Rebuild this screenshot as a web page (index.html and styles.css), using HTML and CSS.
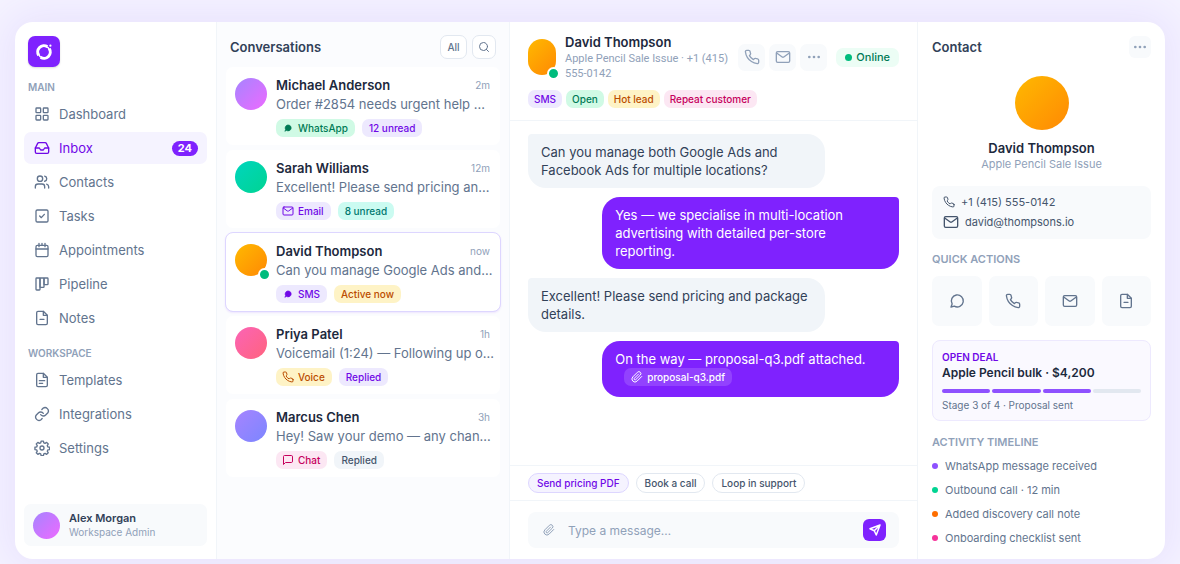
FILE: index.html
```html
<!DOCTYPE html>
<html lang="en">
<head>
  <meta charset="UTF-8" />
  <meta name="viewport" content="width=device-width, initial-scale=1.0"/>
  <title>Inbox</title>
  <link rel="stylesheet" href="styles.css">
</head>
<body>

  <!-- shared icons -->
  <svg class="sprite" aria-hidden="true">
    <symbol id="i-grid" viewBox="0 0 24 24"><rect x="3" y="3" width="7" height="7" rx="1"/><rect x="14" y="3" width="7" height="7" rx="1"/><rect x="3" y="14" width="7" height="7" rx="1"/><rect x="14" y="14" width="7" height="7" rx="1"/></symbol>
    <symbol id="i-inbox" viewBox="0 0 24 24"><path d="M22 12h-6l-2 3h-4l-2-3H2"/><path d="M5.5 5.1 2 12v6a2 2 0 0 0 2 2h16a2 2 0 0 0 2-2v-6l-3.500-6.900A2 2 0 0 0 16.800 4H7.200a2 2 0 0 0-1.700 1.100z"/></symbol>
    <symbol id="i-users" viewBox="0 0 24 24"><path d="M16 21v-2a4 4 0 0 0-4-4H6a4 4 0 0 0-4 4v2"/><circle cx="9" cy="7" r="4"/><path d="M22 21v-2a4 4 0 0 0-3-3.900M16 3.100a4 4 0 0 1 0 7.800"/></symbol>
    <symbol id="i-check" viewBox="0 0 24 24"><rect x="3" y="3" width="18" height="18" rx="2"/><path d="m8.500 12 2.500 2.500 4.500-5"/></symbol>
    <symbol id="i-calendar" viewBox="0 0 24 24"><rect x="3" y="5" width="18" height="17" rx="2"/><path d="M3 10.500h18M7.500 2v5M16.500 2v5M12 2v3"/></symbol>
    <symbol id="i-pipeline" viewBox="0 0 24 24"><rect x="3" y="3" width="6" height="18" rx="1"/><rect x="9" y="3" width="6" height="14" rx="1"/><rect x="15" y="3" width="6" height="10" rx="1"/></symbol>
    <symbol id="i-note" viewBox="0 0 24 24"><path d="M14 2H6a2 2 0 0 0-2 2v16a2 2 0 0 0 2 2h12a2 2 0 0 0 2-2V8z"/><path d="M14 2v6h6M9 14h6"/></symbol>
    <symbol id="i-doc" viewBox="0 0 24 24"><path d="M14 2H6a2 2 0 0 0-2 2v16a2 2 0 0 0 2 2h12a2 2 0 0 0 2-2V8z"/><path d="M14 2v6h6M8 13h8M8 17h5"/></symbol>
    <symbol id="i-link" viewBox="0 0 24 24"><path d="M10 13a5 5 0 0 0 7.500.5l3-3a5 5 0 0 0-7-7l-1.700 1.700"/><path d="M14 11a5 5 0 0 0-7.500-.5l-3 3a5 5 0 0 0 7 7l1.700-1.700"/></symbol>
    <symbol id="i-gear" viewBox="0 0 24 24"><circle cx="12" cy="12" r="3"/><path d="M10.300 2.500h3.400l.6 2.700 1.900.8 2.400-1.500 2.400 2.400-1.500 2.400.8 1.900 2.700.6v3.400l-2.700.6-.8 1.900 1.500 2.400-2.400 2.400-2.400-1.500-1.900.8-.6 2.700h-3.400l-.6-2.700-1.900-.8-2.400 1.500L3 20.100l1.500-2.400-.8-1.900-2.700-.6v-3.400l2.700-.6.8-1.900L3 6.900l2.400-2.400L7.800 6l1.900-.8z" transform="translate(.4 -.9)"/></symbol>
    <symbol id="i-search" viewBox="0 0 24 24"><circle cx="11" cy="11" r="8"/><path d="m21 21-4.300-4.300"/></symbol>
    <symbol id="i-phone" viewBox="0 0 24 24"><path d="M22 16.900v3a2 2 0 0 1-2.200 2 19.800 19.800 0 0 1-8.600-3.100 19.500 19.500 0 0 1-6-6 19.800 19.800 0 0 1-3.100-8.700A2 2 0 0 1 4.100 2h3a2 2 0 0 1 2 1.700c.1 1 .4 1.900.7 2.800a2 2 0 0 1-.5 2.100L8.100 9.900a16 16 0 0 0 6 6l1.300-1.300a2 2 0 0 1 2.100-.4c.9.3 1.800.6 2.800.7a2 2 0 0 1 1.700 2z"/></symbol>
    <symbol id="i-mail" viewBox="0 0 24 24"><rect x="2" y="4" width="20" height="16" rx="2"/><path d="m2.500 6 8.300 6a2 2 0 0 0 2.400 0l8.300-6"/></symbol>
    <symbol id="i-dots" viewBox="0 0 24 24"><g fill="currentColor" stroke="none"><circle cx="5" cy="12" r="2"/><circle cx="12" cy="12" r="2"/><circle cx="19" cy="12" r="2"/></g></symbol>
    <symbol id="i-bubble" viewBox="0 0 24 24"><path d="M3 21l1.700-4.600A9 9 0 1 1 8 19.700z"/></symbol>
    <symbol id="i-chat" viewBox="0 0 24 24"><path d="M21 15a2 2 0 0 1-2 2H7l-4 4V5a2 2 0 0 1 2-2h14a2 2 0 0 1 2 2z"/></symbol>
    <symbol id="i-clip" viewBox="0 0 24 24"><path d="m21.400 11-9.200 9.200a6 6 0 0 1-8.500-8.500l9.200-9.200a4 4 0 0 1 5.700 5.700l-9.200 9.200a2 2 0 0 1-2.800-2.800l8.500-8.500"/></symbol>
    <symbol id="i-send" viewBox="0 0 24 24"><path d="M22 2 2 9.500l8.500 4L14.500 22zM22 2 10.500 13.500"/></symbol>
  </svg>

  <div class="app">

    <aside class="sidebar">
      <a class="logo" href="#" aria-label="Home">
        <svg viewBox="0 0 24 24"><path d="M5 16.500A8.300 8.300 0 0 1 16.500 5" /><path d="M19 7.500A8.300 8.300 0 0 1 7.500 19"/><path class="join" d="M4.500 14.500A8 8 0 0 0 9.500 19.500M14.500 4.500A8 8 0 0 1 19.500 9.500"/><circle class="spark" cx="20.500" cy="3.500" r="1.500"/></svg>
      </a>

      <h3 class="nav-label">MAIN</h3>
      <nav class="nav">
        <a href="#"><svg class="icon"><use href="#i-grid"/></svg>Dashboard</a>
        <a href="#" class="active"><svg class="icon"><use href="#i-inbox"/></svg>Inbox<span class="count">24</span></a>
        <a href="#"><svg class="icon"><use href="#i-users"/></svg>Contacts</a>
        <a href="#"><svg class="icon"><use href="#i-check"/></svg>Tasks</a>
        <a href="#"><svg class="icon"><use href="#i-calendar"/></svg>Appointments</a>
        <a href="#"><svg class="icon"><use href="#i-pipeline"/></svg>Pipeline</a>
        <a href="#"><svg class="icon"><use href="#i-note"/></svg>Notes</a>
      </nav>

      <h3 class="nav-label">WORKSPACE</h3>
      <nav class="nav">
        <a href="#"><svg class="icon"><use href="#i-doc"/></svg>Templates</a>
        <a href="#"><svg class="icon"><use href="#i-link"/></svg>Integrations</a>
        <a href="#"><svg class="icon"><use href="#i-gear"/></svg>Settings</a>
      </nav>

      <div class="user">
        <span class="avatar avatar-user violet"></span>
        <div>
          <div class="user-name">Alex Morgan</div>
          <div class="user-role">Workspace Admin</div>
        </div>
      </div>
    </aside>

    <section class="conversations">
      <header class="panel-head">
        <h2>Conversations</h2>
        <button class="outline-btn all-btn">All</button>
        <button class="outline-btn" aria-label="Search"><svg class="icon small"><use href="#i-search"/></svg></button>
      </header>

      <div class="conv-list">
        <a class="conv" href="#">
          <span class="avatar violet"></span>
          <div class="conv-body">
            <div class="conv-top"><strong>Michael Anderson</strong><time>2m</time></div>
            <p>Order #2854 needs urgent help …</p>
            <div class="tags">
              <span class="tag green"><svg class="icon small solid"><use href="#i-bubble"/></svg>WhatsApp</span>
              <span class="tag purple">12 unread</span>
            </div>
          </div>
        </a>
        <a class="conv" href="#">
          <span class="avatar teal-bg"></span>
          <div class="conv-body">
            <div class="conv-top"><strong>Sarah Williams</strong><time>12m</time></div>
            <p>Excellent! Please send pricing an…</p>
            <div class="tags">
              <span class="tag purple"><svg class="icon small"><use href="#i-mail"/></svg>Email</span>
              <span class="tag teal">8 unread</span>
            </div>
          </div>
        </a>
        <a class="conv selected" href="#">
          <span class="avatar orange online"></span>
          <div class="conv-body">
            <div class="conv-top"><strong>David Thompson</strong><time>now</time></div>
            <p>Can you manage Google Ads and…</p>
            <div class="tags">
              <span class="tag purple"><svg class="icon small solid"><use href="#i-bubble"/></svg>SMS</span>
              <span class="tag amber">Active now</span>
            </div>
          </div>
        </a>
        <a class="conv" href="#">
          <span class="avatar pink-bg"></span>
          <div class="conv-body">
            <div class="conv-top"><strong>Priya Patel</strong><time>1h</time></div>
            <p>Voicemail (1:24) — Following up o…</p>
            <div class="tags">
              <span class="tag amber"><svg class="icon small"><use href="#i-phone"/></svg>Voice</span>
              <span class="tag purple">Replied</span>
            </div>
          </div>
        </a>
        <a class="conv" href="#">
          <span class="avatar indigo"></span>
          <div class="conv-body">
            <div class="conv-top"><strong>Marcus Chen</strong><time>3h</time></div>
            <p>Hey! Saw your demo — any chan…</p>
            <div class="tags">
              <span class="tag pink"><svg class="icon small"><use href="#i-chat"/></svg>Chat</span>
              <span class="tag slate">Replied</span>
            </div>
          </div>
        </a>
      </div>
    </section>

    <main class="chat">
      <header class="chat-head">
        <div class="chat-person">
          <span class="avatar avatar-chat orange online"></span>
          <div class="chat-who">
            <h2>David Thompson</h2>
            <p>Apple Pencil Sale Issue · +1 (415) 555-0142</p>
          </div>
          <div class="chat-actions">
            <button aria-label="Call"><svg class="icon"><use href="#i-phone"/></svg></button>
            <button aria-label="Email"><svg class="icon"><use href="#i-mail"/></svg></button>
            <button aria-label="More"><svg class="icon"><use href="#i-dots"/></svg></button>
          </div>
          <span class="status">Online</span>
        </div>
        <div class="chat-tags">
          <span class="tag purple">SMS</span>
          <span class="tag green">Open</span>
          <span class="tag amber">Hot lead</span>
          <span class="tag pink">Repeat customer</span>
        </div>
      </header>

      <div class="messages">
        <div class="msg">Can you manage both Google Ads and Facebook Ads for multiple locations?</div>
        <div class="msg sent">Yes — we specialise in multi-location advertising with detailed per-store reporting.</div>
        <div class="msg">Excellent! Please send pricing and package details.</div>
        <div class="msg sent">On the way — proposal-q3.pdf attached.
          <a class="file" href="#"><svg class="icon small"><use href="#i-clip"/></svg>proposal-q3.pdf</a>
        </div>
      </div>

      <div class="replies">
        <button class="on">Send pricing PDF</button>
        <button>Book a call</button>
        <button>Loop in support</button>
      </div>

      <form class="composer">
        <div class="composer-box">
          <button type="button" class="attach" aria-label="Attach file"><svg class="icon small"><use href="#i-clip"/></svg></button>
          <input type="text" aria-label="Message" placeholder="Type a message…" />
          <button type="button" class="send" aria-label="Send"><svg class="icon small"><use href="#i-send"/></svg></button>
        </div>
      </form>
    </main>

    <aside class="contact">
      <header class="contact-head">
        <h2>Contact</h2>
        <button aria-label="More"><svg class="icon"><use href="#i-dots"/></svg></button>
      </header>

      <div class="profile">
        <span class="avatar avatar-big orange"></span>
        <h2>David Thompson</h2>
        <p>Apple Pencil Sale Issue</p>
      </div>

      <div class="details">
        <div><svg class="icon small"><use href="#i-phone"/></svg>+1 (415) 555-0142</div>
        <div><svg class="icon"><use href="#i-mail"/></svg>david@thompsons.io</div>
      </div>

      <h3>QUICK ACTIONS</h3>
      <div class="quick">
        <button aria-label="Message"><svg class="icon"><use href="#i-bubble"/></svg></button>
        <button aria-label="Call"><svg class="icon"><use href="#i-phone"/></svg></button>
        <button aria-label="Email"><svg class="icon"><use href="#i-mail"/></svg></button>
        <button aria-label="Note"><svg class="icon"><use href="#i-note"/></svg></button>
      </div>

      <div class="deal">
        <div class="deal-label">OPEN DEAL</div>
        <div class="deal-title">Apple Pencil bulk · $4,200</div>
        <div class="steps"><i class="done"></i><i class="done"></i><i class="done"></i><i></i></div>
        <div class="deal-stage">Stage 3 of 4 · Proposal sent</div>
      </div>

      <h3>ACTIVITY TIMELINE</h3>
      <ul class="timeline">
        <li class="t-purple">WhatsApp message received</li>
        <li class="t-green">Outbound call · 12 min</li>
        <li class="t-orange">Added discovery call note</li>
        <li class="t-pink">Onboarding checklist sent</li>
      </ul>
    </aside>

  </div>

</body>
</html>
```
FILE: styles.css
```css
* {
  box-sizing: border-box;
}

body {
  margin: 0;
  min-height: 100vh;
  padding: 22px 15px 5px;
  display: flex;
  font-family: Inter, "Open Sans", sans-serif;
  font-size: 13px;
  color: #1d293d;
  background-color: #f5f3ff;
}

h2, h3, p, ul {
  margin: 0;
  padding: 0;
}

h2 {
  font-size: 13px;
  line-height: 18px;
  font-weight: 600;
}

h3 {
  font-size: 10px;
  line-height: 14px;
  font-weight: 600;
  color: #90a1b9;
}

a {
  color: inherit;
  text-decoration: none;
}

button {
  display: flex;
  align-items: center;
  justify-content: center;
  padding: 0;
  border: none;
  font-family: inherit;
  cursor: pointer;
}

.sprite {
  position: absolute;
  width: 0;
  height: 0;
}

.icon {
  width: 16px;
  height: 16px;
  flex: none;
  fill: none;
  stroke: currentColor;
  stroke-width: 2;
  stroke-linecap: round;
  stroke-linejoin: round;
}

.icon.small {
  width: 12px;
  height: 12px;
}

.icon.solid {
  fill: currentColor;
  padding: 2px;
}

.app {
  flex: 1;
  display: grid;
  grid-template-columns: 202px 293px 1fr 248px;
  background-color: white;
  border-radius: 18px;
  overflow: hidden;
  box-shadow: 0 0 40px 10px #e9e3fe;
}

/* avatars */
.avatar {
  position: relative;
  flex: none;
  width: 32px;
  height: 32px;
  border-radius: 50%;
}

.violet { background: linear-gradient(135deg, #a684ff, #ed6aff); }
.teal-bg { background: linear-gradient(135deg, #00d5be, #00d492); }
.orange { background: linear-gradient(135deg, #ffb900, #ff8904); }
.pink-bg { background: linear-gradient(135deg, #fb64b6, #ff637e); }
.indigo { background: linear-gradient(135deg, #a684ff, #7c86ff); }

.online::after {
  content: "";
  position: absolute;
  right: -4px;
  bottom: -5px;
  width: 9px;
  height: 9px;
  border: 2px solid white;
  border-radius: 50%;
  background-color: #00bc7d;
}

/* tags */
.tags {
  display: flex;
  gap: 7px;
}

.tag {
  display: inline-flex;
  align-items: center;
  gap: 4px;
  height: 18px;
  padding: 0 7px;
  border-radius: 7px;
  font-size: 10px;
  line-height: 18px;
  font-weight: 500;
  white-space: nowrap;
}

.tag .icon {
  margin-left: -1px;
}

.green { background-color: #d0fae5; color: #007a55; }
.purple { background-color: #ede9fe; color: #7008e7; }
.teal { background-color: #cbfbf1; color: #00786f; }
.amber { background-color: #fef3c6; color: #bb4d00; }
.pink { background-color: #fce7f3; color: #c6005c; }
.slate { background-color: #f1f5f9; color: #45556c; }

/* sidebar */
.sidebar {
  display: flex;
  flex-direction: column;
  padding: 14px 9px 13px;
  border-right: 1px solid #f1f5f9;
}

.logo {
  display: flex;
  align-items: center;
  justify-content: center;
  width: 32px;
  height: 31px;
  margin: 0 4px 13px;
  border-radius: 7px;
  background-color: #7f22fe;
  box-shadow: 0 1px 2px rgba(0, 0, 0, 0.15);
}

.logo svg {
  width: 18px;
  height: 18px;
  fill: none;
  stroke: white;
  stroke-width: 4;
}

.logo .join {
  stroke-width: 2;
}

.logo .spark {
  fill: white;
  stroke: none;
}

.nav-label {
  margin: 0 4px 4px;
}

.nav {
  display: flex;
  flex-direction: column;
  gap: 2px;
  margin-bottom: 12px;
}

.nav a {
  display: flex;
  align-items: center;
  gap: 9px;
  height: 32px;
  padding: 0 9px 0 10px;
  border-radius: 7px;
  color: #62748e;
}

.nav a.active {
  background-color: #f5f3ff;
  color: #7008e7;
}

.count {
  margin-left: auto;
  padding: 0 6px;
  border-radius: 8px;
  background-color: #7f22fe;
  color: white;
  font-size: 11px;
  line-height: 15px;
  font-weight: 700;
}

.user {
  display: flex;
  align-items: center;
  gap: 9px;
  height: 42px;
  margin-top: auto;
  padding: 0 9px;
  border-radius: 7px;
  background-color: #f8fafc;
}

.avatar-user {
  width: 27px;
  height: 27px;
}

.user-name {
  font-size: 11px;
  line-height: 14px;
  font-weight: 600;
  color: #314158;
}

.user-role {
  font-size: 10px;
  line-height: 14px;
  color: #90a1b9;
}

/* conversations */
.conversations {
  padding: 0 8px;
  background-color: #fbfcfe;
  border-right: 1px solid #f1f5f9;
}

.panel-head {
  display: flex;
  align-items: center;
  gap: 5px;
  height: 44px;
  padding: 6px 5px 0;
}

.panel-head h2 {
  flex: 1;
  color: #314158;
}

.outline-btn {
  width: 24px;
  height: 24px;
  border: 1px solid #e2e8f0;
  border-radius: 7px;
  background-color: white;
  color: #62748e;
}

.all-btn {
  width: 27px;
  font-size: 10px;
  font-weight: 500;
}

.conv-list {
  display: flex;
  flex-direction: column;
  gap: 3px;
}

.conv {
  display: flex;
  gap: 9px;
  height: 80px;
  padding: 11px 10px 0 9px;
  border: 1px solid transparent;
  border-radius: 8px;
  background-color: white;
  background-clip: padding-box;
}

.conv.selected {
  border-color: #ddd6ff;
  box-shadow: 0 1px 2px rgba(127, 34, 254, 0.1);
}

.conv-body {
  flex: 1;
  min-width: 0;
}

.conv-top {
  display: flex;
  justify-content: space-between;
  line-height: 14px;
}

.conv-top strong {
  font-weight: 600;
}

.conv-top time {
  font-size: 10px;
  color: #90a1b9;
}

.conv p {
  margin: 3px 0 6px;
  line-height: 18px;
  color: #62748e;
  white-space: nowrap;
}

/* chat */
.chat {
  display: flex;
  flex-direction: column;
  min-width: 0;
}

.chat-head {
  padding: 11px 18px 12px;
  border-bottom: 1px solid #f1f5f9;
}

.chat-person {
  display: flex;
  align-items: center;
  gap: 9px;
}

.avatar-chat {
  width: 28px;
  height: 36px;
  border-radius: 14px;
}

.chat-who {
  flex: 1;
}

.chat-who p {
  font-family: Roboto, sans-serif;
  font-size: 11px;
  line-height: 15px;
  color: #90a1b9;
}

.chat-actions {
  display: flex;
  gap: 4px;
}

.chat-actions button {
  width: 27px;
  height: 27px;
  border-radius: 7px;
  background-color: #f8fafc;
  color: #90a1b9;
}

.status {
  display: flex;
  align-items: center;
  gap: 4px;
  padding: 0 9px;
  border-radius: 7px;
  background-color: #ecfdf5;
  color: #007a55;
  font-size: 11px;
  line-height: 19px;
  font-weight: 500;
}

.status::before {
  content: "";
  width: 7px;
  height: 7px;
  border-radius: 50%;
  background-color: #00bc7d;
}

.chat-tags {
  display: flex;
  gap: 4px;
  margin-top: 9px;
}

.chat-tags .tag {
  padding: 0 6px;
}

.messages {
  flex: 1;
  display: flex;
  flex-direction: column;
  gap: 9px;
  padding: 13px 18px;
}

.msg {
  width: 80%;
  padding: 9px 13px;
  border-radius: 4px 18px 18px 18px;
  background-color: #f1f5f9;
  color: #314158;
  line-height: 18px;
}

.msg.sent {
  align-self: flex-end;
  border-radius: 18px 4px 18px 18px;
  background-color: #7f22fe;
  color: white;
}

.file {
  display: flex;
  align-items: center;
  gap: 4px;
  width: max-content;
  margin: 0 0 2px 9px;
  padding: 0 7px;
  border-radius: 7px;
  background-color: rgba(255, 255, 255, 0.15);
  font-size: 10px;
  line-height: 18px;
  font-weight: 500;
}

.replies {
  display: flex;
  gap: 7px;
  padding: 7px 18px;
  border-top: 1px solid #f1f5f9;
}

.replies button {
  height: 20px;
  padding: 0 8px;
  border: 1px solid #e2e8f0;
  border-radius: 10px;
  background-color: white;
  color: #45556c;
  font-size: 10px;
  font-weight: 500;
}

.replies .on {
  border-color: #ddd6ff;
  background-color: #f5f3ff;
  color: #7008e7;
}

.composer {
  padding: 11px 18px;
  border-top: 1px solid #f1f5f9;
}

.composer-box {
  display: flex;
  align-items: center;
  height: 36px;
  padding: 0 13px;
  border-radius: 8px;
  background-color: #f8fafc;
}

.attach {
  width: 16px;
  margin-right: 11px;
  background: none;
  color: #90a1b9;
}

.composer input {
  flex: 1;
  min-width: 0;
  padding: 0;
  border: none;
  outline: none;
  background: none;
  font-family: inherit;
  font-size: 12px;
}

.composer input::placeholder {
  color: #90a1b9;
}

.send {
  width: 23px;
  height: 22px;
  border-radius: 6px;
  background-color: #7f22fe;
  color: white;
}

.send .icon {
  stroke-width: 3;
}

/* contact */
.contact {
  padding: 14px 14px 0;
  border-left: 1px solid #f1f5f9;
}

.contact-head {
  display: flex;
  align-items: center;
  justify-content: space-between;
}

.contact-head h2 {
  color: #314158;
}

.contact-head button {
  width: 22px;
  height: 22px;
  border-radius: 6px;
  background-color: #f8fafc;
  color: #90a1b9;
}

.profile {
  display: flex;
  flex-direction: column;
  align-items: center;
  margin: 18px 0 14px;
}

.avatar-big {
  width: 54px;
  height: 54px;
  margin-bottom: 9px;
}

.profile p {
  font-size: 11px;
  line-height: 15px;
  color: #90a1b9;
}

.details {
  margin-bottom: 13px;
  padding: 6px 11px 7px;
  border-radius: 8px;
  background-color: #f8fafc;
  font-size: 11px;
  line-height: 20px;
  color: #45556c;
}

.details div {
  display: flex;
  align-items: center;
  gap: 6px;
}

.contact h3 {
  font-size: 11px;
}

.quick {
  display: grid;
  grid-template-columns: repeat(4, 1fr);
  gap: 7px;
  margin: 10px 0 14px;
}

.quick button {
  height: 50px;
  border-radius: 7px;
  background-color: #f8fafc;
  color: #62748e;
}

.deal {
  margin-bottom: 14px;
  padding: 9px 9px 8px;
  border: 1px solid #ede9fe;
  border-radius: 8px;
  background-color: #faf9ff;
}

.deal-label {
  font-size: 10px;
  line-height: 14px;
  font-weight: 600;
  color: #7008e7;
}

.deal-title {
  font-size: 12px;
  line-height: 18px;
  font-weight: 600;
}

.steps {
  display: grid;
  grid-template-columns: repeat(4, 1fr);
  gap: 2px;
  margin: 7px 0 5px;
}

.steps i {
  height: 4px;
  border-radius: 2px;
  background-color: #e2e8f0;
}

.steps .done {
  background-color: #8e51ff;
}

.deal-stage {
  font-size: 10px;
  line-height: 14px;
  color: #62748e;
}

.timeline {
  margin-top: 5px;
  list-style: none;
}

.timeline li {
  display: flex;
  align-items: center;
  gap: 7px;
  font-size: 11px;
  line-height: 24px;
  color: #62748e;
}

.timeline li::before {
  content: "";
  width: 6px;
  height: 6px;
  border-radius: 50%;
  background-color: currentColor;
}

.t-purple::before { color: #8e51ff; }
.t-green::before { color: #00d492; }
.t-orange::before { color: #fe6e00; }
.t-pink::before { color: #f6339a; }
```
